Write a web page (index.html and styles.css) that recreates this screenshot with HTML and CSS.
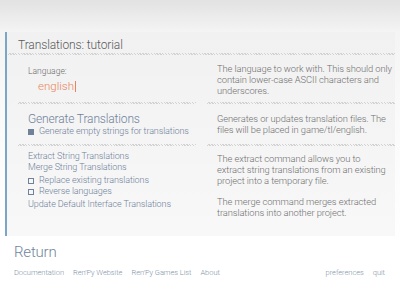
FILE: index.html
```html
<!DOCTYPE html>
<html lang="en">
  <head>
    <meta charset="UTF-8" />
    <title>Translations</title>
    <link rel="stylesheet" href="styles.css">
  </head>
  <body>
    <div class="panel">
      <div class="title">Translations: tutorial</div>
      <div class="sep wide"></div>

      <div class="row first">
        <div class="left">
          <div class="label">Language:</div>
          <div class="input">english<span class="caret"></span></div>
        </div>
        <div class="right">
          <p>The language to work with. This should only<br>contain lower-case ASCII characters and<br>underscores.</p>
        </div>
      </div>

      <div class="row seps">
        <div class="sep"></div>
        <div class="sep"></div>
      </div>

      <div class="row second">
        <div class="left">
          <div class="big">Generate Translations</div>
          <div class="check"><span class="box on"></span>Generate empty strings for translations</div>
        </div>
        <div class="right">
          <p>Generates or updates translation files. The<br>files will be placed in game/tl/english.</p>
        </div>
      </div>

      <div class="row seps">
        <div class="sep"></div>
        <div class="sep"></div>
      </div>

      <div class="row third">
        <div class="left">
          <div class="link">Extract String Translations</div>
          <div class="link">Merge String Translations</div>
          <div class="checks">
            <div class="check"><span class="box"></span>Replace existing translations</div>
            <div class="check"><span class="box"></span>Reverse languages</div>
          </div>
          <div class="link">Update Default Interface Translations</div>
        </div>
        <div class="right">
          <p>The extract command allows you to<br>extract string translations from an existing<br>project into a temporary file.</p>
          <p>The merge command merges extracted<br>translations into another project.</p>
        </div>
      </div>
    </div>

    <div class="return">Return</div>

    <div class="footer">
      <span>Documentation</span>
      <span>Ren'Py Website</span>
      <span>Ren'Py Games List</span>
      <span>About</span>
      <span class="push">preferences</span>
      <span>quit</span>
    </div>
  </body>
</html>
```

FILE: styles.css
```css
body {
  margin: 0;
  width: 400px;
  height: 300px;
  font-family: Roboto, "Noto Sans", sans-serif;
  font-weight: 300;
  background: linear-gradient(#e2e2e2 0, #f4f4f4 32px, #fafafa 120px, #ffffff 240px);
  overflow: hidden;
}

.panel {
  margin: 32px 0 0 5px;
  width: 388px;
  height: 204px;
  border-left: 2px solid #7ba6c8;
  background: linear-gradient(#f1f1f1, #f8f8f8);
}

.title {
  padding: 6px 0 0 11px;
  height: 14px;
  font-size: 12px;
  line-height: 14px;
  letter-spacing: -0.1px;
  color: #5a5a5a;
}

.sep {
  height: 2px;
  background: repeating-linear-gradient(45deg, #d2d2d2 0, #d2d2d2 1px, transparent 1px, transparent 2px);
}

.sep.wide {
  margin: 1px 0 0 1px;
}

.row {
  display: grid;
  grid-template-columns: 178px 188px;
  column-gap: 11px;
  padding-left: 11px;
}

.left {
  padding-left: 10px;
}

.right p {
  margin: 0;
  padding-left: 10px;
  font-size: 9.4px;
  line-height: 11px;
  letter-spacing: -0.1px;
  white-space: nowrap;
  color: #707070;
}

.first {
  height: 47px;
  padding-top: 11px;
  box-sizing: border-box;
}

.first .right p {
  margin-top: -3px;
}

.label {
  font-size: 8.5px;
  line-height: 10px;
  color: #6a6a6a;
}

.input {
  margin: 3px 0 0 10px;
  font-size: 11.5px;
  line-height: 14px;
  color: #e8845a;
}

.caret {
  display: inline-block;
  width: 1px;
  height: 11px;
  margin-left: 1px;
  vertical-align: -2px;
  background: #e8845a;
}

.second {
  height: 40px;
  padding-top: 8px;
  box-sizing: border-box;
}

.second .right p {
  padding-top: 1px;
}

.big {
  font-size: 12px;
  line-height: 14px;
  letter-spacing: -0.15px;
  color: #6f829a;
}

.check {
  display: flex;
  align-items: center;
  font-size: 9px;
  line-height: 11px;
  letter-spacing: -0.1px;
  color: #6f829a;
}

.box {
  width: 4px;
  height: 4px;
  border: 1px solid #6f829a;
  margin-right: 5px;
}

.box.on {
  background: #6f829a;
}

.third {
  padding-top: 5px;
}

.third .right p {
  padding-top: 2px;
  margin-bottom: 8px;
}

.link {
  font-size: 9px;
  line-height: 11px;
  letter-spacing: -0.1px;
  color: #6f829a;
}

.checks {
  margin: 2px 0;
}

.return {
  margin: 7px 0 0 14px;
  font-size: 15px;
  line-height: 18px;
  letter-spacing: -0.2px;
  color: #71859b;
}

.footer {
  display: flex;
  gap: 9px;
  margin: 7px 15px 0 14px;
  font-size: 7.5px;
  line-height: 10px;
  letter-spacing: -0.05px;
  color: #8295a9;
}

.push {
  margin-left: auto;
}
```
